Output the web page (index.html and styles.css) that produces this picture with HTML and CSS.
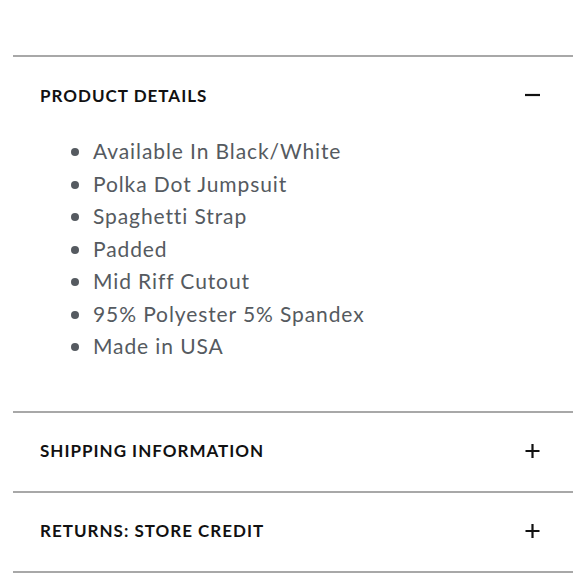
FILE: index.html
```html
<!DOCTYPE html>
<html lang="en">
<head>
<meta charset="utf-8">
<title>Product details</title>
<link rel="stylesheet" href="styles.css">
</head>
<body>
<div class="accordion">
  <section class="panel panel-open">
    <div class="panel-head">
      <h2 class="panel-title">PRODUCT DETAILS</h2>
      <svg class="icon" width="15" height="14" viewBox="0 0 15 14"><path d="M0 7H15" stroke="#111" stroke-width="2.2"/></svg>
    </div>
    <ul class="details">
      <li>Available In Black/White</li>
      <li>Polka Dot Jumpsuit</li>
      <li>Spaghetti Strap</li>
      <li>Padded</li>
      <li>Mid Riff Cutout</li>
      <li>95% Polyester 5% Spandex</li>
      <li>Made in USA</li>
    </ul>
  </section>
  <section class="panel">
    <div class="panel-head">
      <h2 class="panel-title">SHIPPING INFORMATION</h2>
      <svg class="icon" width="15" height="14" viewBox="0 0 15 14"><path d="M0.5 7H14.5M7.5 0V14" stroke="#111" stroke-width="2.2"/></svg>
    </div>
  </section>
  <section class="panel">
    <div class="panel-head">
      <h2 class="panel-title">RETURNS: STORE CREDIT</h2>
      <svg class="icon" width="15" height="14" viewBox="0 0 15 14"><path d="M0.5 7H14.5M7.5 0V14" stroke="#111" stroke-width="2.2"/></svg>
    </div>
  </section>
</div>
</body>
</html>
```
FILE: styles.css
```css
html, body {
  margin: 0;
  padding: 0;
  background: #fff;
}
body {
  font-family: Lato, "Liberation Sans", sans-serif;
}
.accordion {
  margin: 55px 0 0 13px;
  width: 560px;
  border-bottom: 2px solid #a8a8a8;
}
.panel {
  border-top: 2px solid #a8a8a8;
}
.panel-head {
  height: 78px;
  display: flex;
  align-items: center;
  justify-content: space-between;
  padding: 0 33px 2px 27px;
  box-sizing: border-box;
}
.panel-title {
  margin: 0;
  font-size: 17px;
  font-weight: 700;
  letter-spacing: 1px;
  color: #111;
}
.icon {
  display: block;
}
.details {
  margin: 0;
  padding: 0 0 48px 80px;
  list-style: none;
  color: #555a60;
  font-size: 21px;
  letter-spacing: 0.9px;
  line-height: 32.5px;
}
.details li {
  position: relative;
}
.details li::before {
  content: "";
  position: absolute;
  left: -22px;
  top: 13px;
  width: 8px;
  height: 8px;
  border-radius: 50%;
  background: #555a60;
}
```
